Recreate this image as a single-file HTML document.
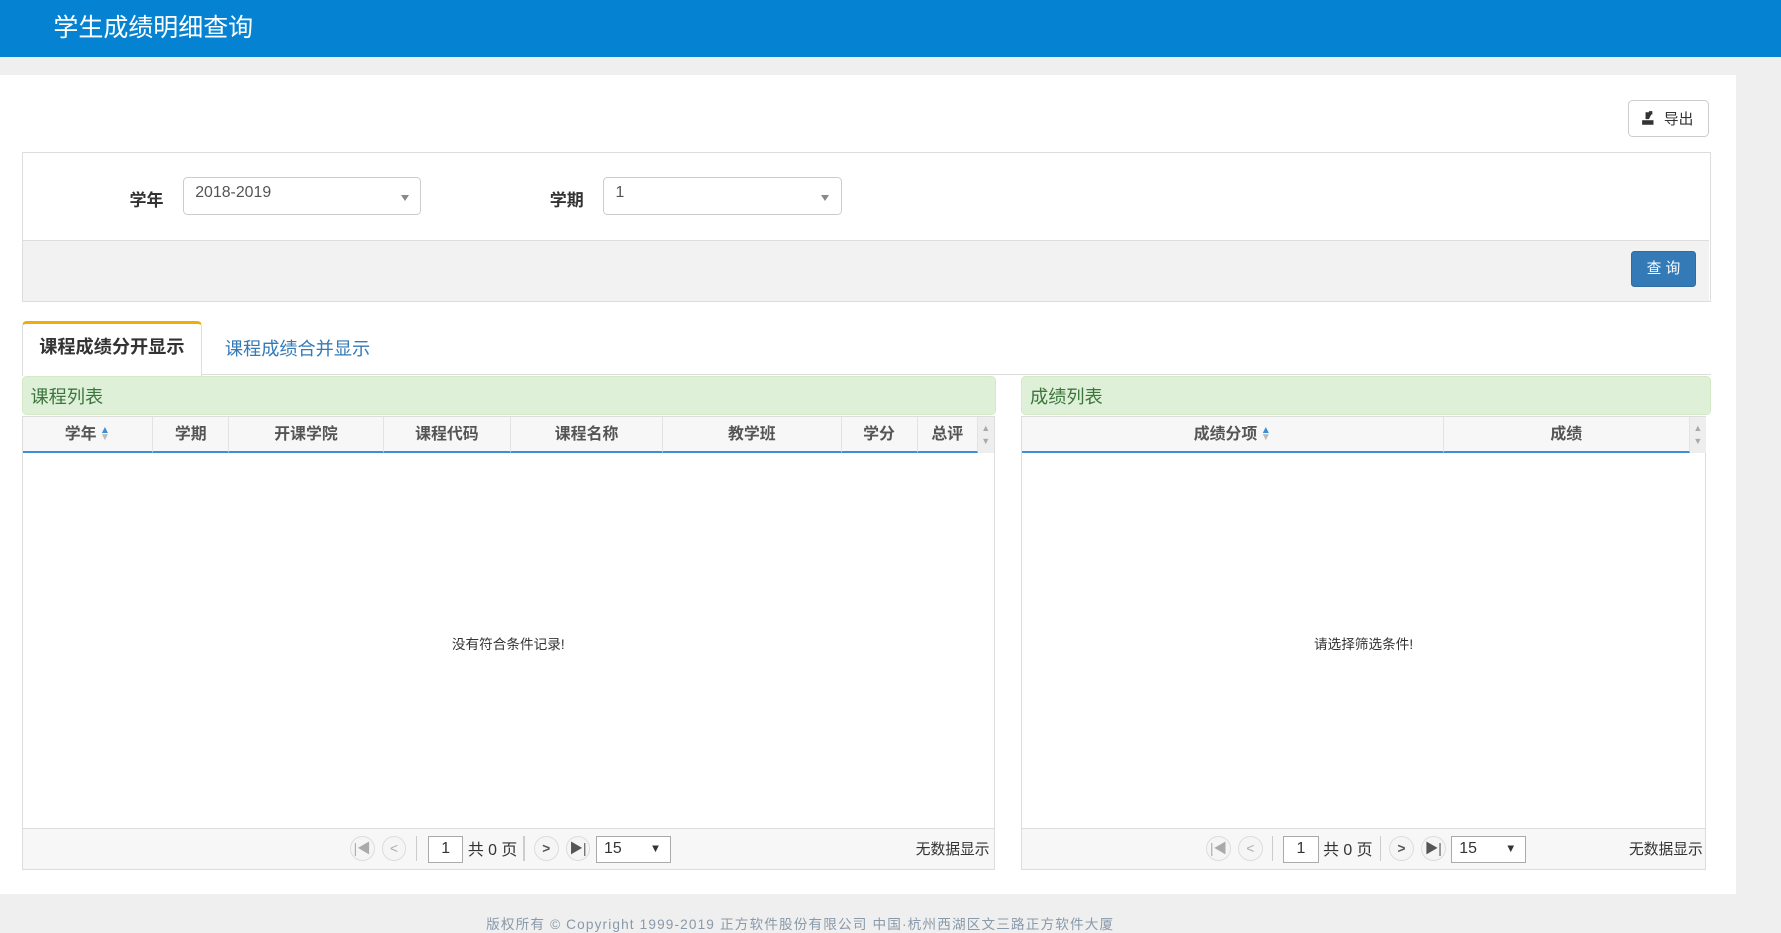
<!DOCTYPE html>
<html><head><meta charset="utf-8"><style>
html,body{margin:0;padding:0}
body{width:1568px;height:810px;overflow:hidden;zoom:1.13584;background:#efefef;font-family:"Liberation Sans","Noto Sans CJK SC",sans-serif;color:#333;position:relative;font-size:13px}
.abs{position:absolute;box-sizing:border-box}
.hdr{left:0;top:0;width:1568px;height:50px;background:#0583d2;color:#fff;font-size:22px;padding:7px 0 0 47px}
.panel{left:0;top:66px;width:1528px;height:721px;background:#fff}
.btn{border:1px solid #ccc;border-radius:4px;background:#fff}
.sel{border:1px solid #ccc;border-radius:4px;background:#fff;height:33px;font-size:14px;padding:5px 10px;color:#555}
.sel:after{content:"";position:absolute;right:10px;top:15px;border:4px solid transparent;border-top:6px solid #888}
.lbl{font-weight:bold;font-size:15px;color:#333}
.green{background:#dff0d8;border:1px solid #d6e9c6;border-radius:4px;color:#3c763d;font-size:16px;padding:5px 7px}
.grid{border:1px solid #ddd;background:#fff}
.th{top:0;height:32px;background:#f7f7f7;border-right:1px solid #e3e3e3;border-bottom:2px solid #3a8fd8;text-align:center;font-size:14px;color:#555;line-height:32px;font-weight:bold}
.srt{display:inline-block;vertical-align:middle;line-height:6px;font-size:9px;margin-left:3px}
.pager{left:0;bottom:0;height:36px;width:100%;background:#f7f7f7;border-top:1px solid #ddd}
.circ{width:22px;height:22px;border:1px solid #ddd;border-radius:50%;top:6px;color:#aaa;font-size:12px;text-align:center;line-height:22px;background:#f5f5f5}
.pi{top:6px;height:24px;border:1px solid #aaa;background:#fff;font-size:14px;line-height:22px}
.empty{font-size:12px;color:#333;text-align:center;width:100%}
</style></head><body>
<div class="abs hdr">学生成绩明细查询</div>
<div class="abs panel"></div>
<div class="abs btn" style="left:1433px;top:88px;width:72px;height:33px;font-size:13px;padding:6px 0 0 31px">导出
<svg style="position:absolute;left:11px;top:8px" width="14" height="14" viewBox="0 0 14 14"><rect x="1" y="9" width="10" height="4" fill="#333"/><path d="M4 8 L4 2 L10 2 L7 8 Z" fill="#333"/><rect x="7" y="1" width="3" height="3" fill="#333"/></svg></div>

<div class="abs" style="left:19px;top:134px;width:1487px;height:132px;border:1px solid #ddd;background:#fff"></div>
<div class="abs" style="left:20px;top:211px;width:1485px;height:54px;background:#f2f2f2;border-top:1px solid #ddd"></div>
<div class="abs lbl" style="left:114px;top:164px">学年</div>
<div class="abs sel" style="left:161px;top:156px;width:210px">2018-2019</div>
<div class="abs lbl" style="left:484px;top:164px">学期</div>
<div class="abs sel" style="left:531px;top:156px;width:210px">1</div>
<div class="abs" style="left:1436px;top:221px;width:57px;height:32px;background:#337ab7;border:1px solid #2e6da4;border-radius:3px;color:#fff;font-size:13px;text-align:center;line-height:30px">查 询</div>

<div class="abs" style="left:177px;top:329px;width:1329px;height:1px;background:#ddd"></div>
<div class="abs" style="left:19px;top:283px;width:159px;height:48px;background:#fff;border:1px solid #ddd;border-top:3px solid #f0ad0a;border-bottom:none;border-radius:4px 4px 0 0;font-weight:bold;font-size:16px;color:#333;text-align:center;line-height:42px">课程成绩分开显示</div>
<div class="abs" style="left:198px;top:295px;font-size:16px;color:#337ab7">课程成绩合并显示</div>

<div class="abs green" style="left:19px;top:331px;width:858px;height:34px">课程列表</div>
<div class="abs grid" style="left:19px;top:366px;width:857px;height:400px">
 <div class="abs th" style="left:0;width:115px">学年<span class="srt"><span style="color:#3a8fd8">▲</span><br><span style="color:#bbb">▼</span></span></div>
 <div class="abs th" style="left:115px;width:67px">学期</div>
 <div class="abs th" style="left:182px;width:136px">开课学院</div>
 <div class="abs th" style="left:318px;width:112px">课程代码</div>
 <div class="abs th" style="left:430px;width:134px">课程名称</div>
 <div class="abs th" style="left:564px;width:157px">教学班</div>
 <div class="abs th" style="left:721px;width:67px">学分</div>
 <div class="abs th" style="left:788px;width:53px">总评</div>
 <div class="abs" style="left:841px;top:0;width:14px;height:32px;background:#eee;color:#aaa;font-size:8px;text-align:center;line-height:11px;padding-top:5px">▲<br>▼</div>
 <div class="abs empty" style="left:0;top:190px">没有符合条件记录!</div>
 <div class="abs pager">
  <div class="abs circ" style="left:288px">|◀</div><div class="abs circ" style="left:316px">&lt;</div>
  <div class="abs" style="left:346px;top:6px;width:1px;height:22px;background:#ccc"></div>
  <div class="abs pi" style="left:357px;width:31px;text-align:center">1</div>
  <div class="abs" style="left:392px;top:7px;font-size:14px">共 0 页</div>
  <div class="abs" style="left:441px;top:6px;width:1px;height:22px;background:#ccc"></div>
  <div class="abs circ" style="left:450px;color:#555;font-weight:bold">&gt;</div><div class="abs circ" style="left:478px;color:#555">▶|</div>
  <div class="abs pi" style="left:505px;width:66px;padding-left:6px">15<span style="position:absolute;right:8px;font-size:10px">▼</span></div>
  <div class="abs" style="right:4px;top:8px;font-size:13px">无数据显示</div>
 </div>
</div>

<div class="abs green" style="left:899px;top:331px;width:607px;height:34px">成绩列表</div>
<div class="abs grid" style="left:899px;top:366px;width:603px;height:400px">
 <div class="abs th" style="left:0;width:371px">成绩分项<span class="srt"><span style="color:#3a8fd8">▲</span><br><span style="color:#bbb">▼</span></span></div>
 <div class="abs th" style="left:371px;width:217px">成绩</div>
 <div class="abs" style="left:588px;top:0;width:14px;height:32px;background:#eee;color:#aaa;font-size:8px;text-align:center;line-height:11px;padding-top:5px">▲<br>▼</div>
 <div class="abs empty" style="left:0;top:190px">请选择筛选条件!</div>
 <div class="abs pager">
  <div class="abs circ" style="left:162px">|◀</div><div class="abs circ" style="left:190px">&lt;</div>
  <div class="abs" style="left:220px;top:6px;width:1px;height:22px;background:#ccc"></div>
  <div class="abs pi" style="left:230px;width:31px;text-align:center">1</div>
  <div class="abs" style="left:265px;top:7px;font-size:14px">共 0 页</div>
  <div class="abs" style="left:315px;top:6px;width:1px;height:22px;background:#ccc"></div>
  <div class="abs circ" style="left:323px;color:#555;font-weight:bold">&gt;</div><div class="abs circ" style="left:351px;color:#555">▶|</div>
  <div class="abs pi" style="left:378px;width:66px;padding-left:6px">15<span style="position:absolute;right:8px;font-size:10px">▼</span></div>
  <div class="abs" style="right:2px;top:8px;font-size:13px">无数据显示</div>
 </div>
</div>
<div class="abs" style="left:428px;top:804px;font-size:12px;color:#8899aa;white-space:nowrap;letter-spacing:1px">版权所有 © Copyright 1999-2019 正方软件股份有限公司 中国·杭州西湖区文三路正方软件大厦</div>
</body></html>
